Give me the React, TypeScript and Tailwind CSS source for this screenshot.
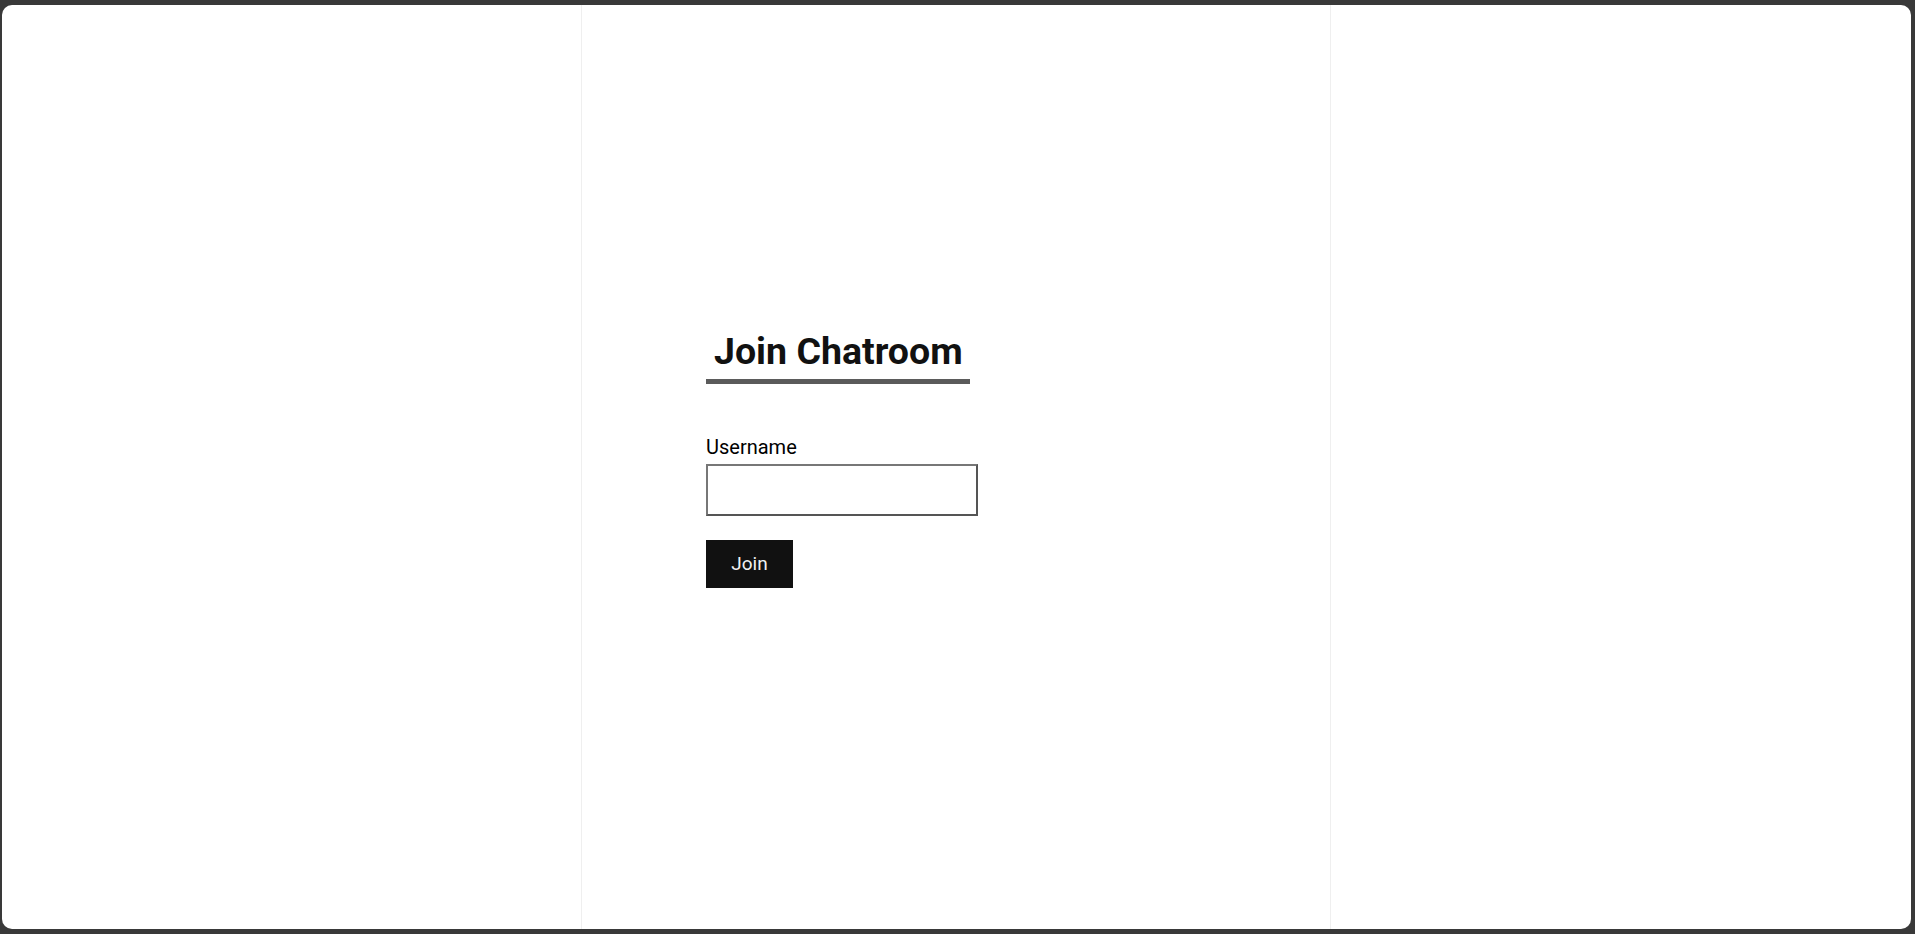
export default function App() {
  return (
    <div className="h-[934px] w-full bg-[#393939] pt-[5px] pb-[5px] pl-[2px] pr-[4px] font-['Roboto',sans-serif]">
      <div className="flex h-full overflow-hidden rounded-[10px] bg-white">
        <div className="w-[580px] shrink-0 border-r border-[#efefef]" />
        <div className="w-[749px] shrink-0 border-r border-[#efefef] pl-[124px] pt-[324px]">
          <div className="flex w-[272px] flex-col">
            <h1 className="w-[264px] whitespace-nowrap border-b-[5px] border-[#5b5b5b] px-2 pb-[6px] text-[37.5px] font-bold leading-[44px] text-[#111]">
              Join Chatroom
            </h1>
            <label className="mt-[52px] text-[20px] leading-[23px] text-black">Username</label>
            <input
              type="text"
              className="mt-[5px] h-[52px] w-[272px] border-2 border-t-[#777] border-l-[#777] border-r-[#555] border-b-[#555] bg-white px-2 text-[18px] outline-none"
            />
            <button className="mt-[24px] h-[48px] w-[87px] bg-[#111] text-[19px] text-[#f0f0f0]">Join</button>
          </div>
        </div>
        <div className="flex-1" />
      </div>
    </div>
  );
}
